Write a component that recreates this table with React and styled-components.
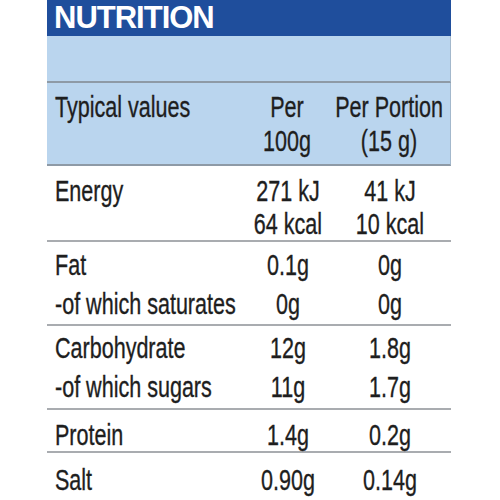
import React from "react";
import styled, { createGlobalStyle } from "styled-components";

const Global = createGlobalStyle`
  html, body { margin: 0; padding: 0; background: #ffffff; }
  body { font-family: "Liberation Sans", Arial, sans-serif; }
`;

const Panel = styled.div`
  margin-left: 47px;
  width: 404px;
  color: #1e1e1e;
  font-family: "Liberation Sans", Arial, sans-serif;
`;

const Title = styled.div`
  height: 36px;
  background: #1f4e9c;
  color: #ffffff;
  font-weight: 700;
  font-size: 31px;
  line-height: 36px;
  padding-left: 7px;
  letter-spacing: -1px;
`;

const Band = styled.div`
  height: 47px;
  box-sizing: border-box;
  background: #bad5ee;
  border-right: 1px solid #a3b8cc;
  border-bottom: 2px solid #8e9aa6;
`;

const Row = styled.div`
  display: grid;
  grid-template-columns: minmax(0, 1fr) 96px 108px;
  padding-right: 7px;
  box-sizing: border-box;
  height: ${(p) => p.$h}px;
  padding-top: ${(p) => p.$pt}px;
  background: ${(p) => (p.$head ? "#bad5ee" : "#ffffff")};
  border-right: ${(p) => (p.$head ? "1px solid #a3b8cc" : "none")};
  border-bottom: ${(p) => (p.$last ? "none" : `2px solid ${p.$head ? "#8e9aa6" : "#a9acb0"}`)};
  font-size: 29.5px;
  line-height: ${(p) => p.$lh}px;
  -webkit-text-stroke: 0.35px currentColor;
`;

const Label = styled.div`
  padding-left: 8px;
  min-width: 0;
`;

const Value = styled.div`
  min-width: 0;
`;

const Line = styled.div`
  display: flex;
  justify-content: ${(p) => (p.$left ? "flex-start" : "center")};
  height: ${(p) => p.$lh}px;
  white-space: nowrap;
  transform: scaleX(0.73);
  transform-origin: ${(p) => (p.$left ? "left" : "center")} center;
`;

const rows = [
  { h: 76, pt: 8, lh: 33, label: ["Energy"], a: ["271 kJ", "64 kcal"], b: ["41 kJ", "10 kcal"] },
  { h: 84, pt: 3, lh: 39, label: ["Fat", "-of which saturates"], a: ["0.1g", "0g"], b: ["0g", "0g"] },
  { h: 84, pt: 2, lh: 39, label: ["Carbohydrate", "-of which sugars"], a: ["12g", "11g"], b: ["1.8g", "1.7g"] },
  { h: 43, pt: 5, lh: 39, label: ["Protein"], a: ["1.4g"], b: ["0.2g"] },
  { h: 47, pt: 7, lh: 39, label: ["Salt"], a: ["0.90g"], b: ["0.14g"], last: true },
];

const Cell = ({ as: Comp, lines, left, lh }) => (
  <Comp>
    {lines.map((t, i) => (
      <Line key={i} $lh={lh} $left={left}>
        {t}
      </Line>
    ))}
  </Comp>
);

export default function App() {
  return (
    <>
      <Global />
      <Panel>
        <Title>NUTRITION</Title>
        <Band />
        <Row $head $h={83} $pt={7} $lh={34}>
          <Cell as={Label} left lh={34} lines={["Typical values"]} />
          <Cell as={Value} lh={34} lines={["Per", "100g"]} />
          <Cell as={Value} lh={34} lines={["Per Portion", "(15 g)"]} />
        </Row>
        {rows.map((r, i) => (
          <Row key={i} $h={r.h} $pt={r.pt} $lh={r.lh} $last={r.last}>
            <Cell as={Label} left lh={r.lh} lines={r.label} />
            <Cell as={Value} lh={r.lh} lines={r.a} />
            <Cell as={Value} lh={r.lh} lines={r.b} />
          </Row>
        ))}
      </Panel>
    </>
  );
}
